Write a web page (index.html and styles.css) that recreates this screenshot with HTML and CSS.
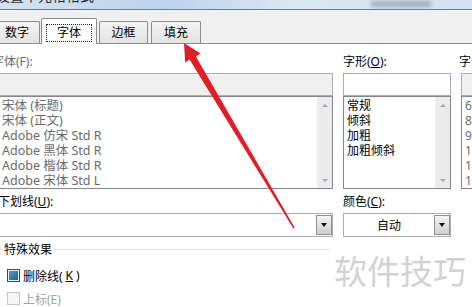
FILE: index.html
```html
<!doctype html>
<html>
	<head>
		<meta charset="utf-8">
		<title>设置单元格格式</title>
		<link rel="stylesheet" href="styles.css">
	</head>
	<body>
		<div class="titlebar">
			<span class="title">设置单元格格式</span>
			<span class="blur"></span>
		</div>

		<div class="tabs">
			<div class="tab tab-num">数字</div>
			<div class="tab tab-font active"><span class="focus">字体</span></div>
			<div class="tab tab-border">边框</div>
			<div class="tab tab-fill">填充</div>
		</div>

		<div class="panel">
			<div class="fontgrid">
				<div class="col">
					<div class="label dim">字体(F):</div>
					<div class="input gray"></div>
					<div class="list">
						<ul class="items dim wide">
							<li>宋体 (标题)</li>
							<li>宋体 (正文)</li>
							<li>Adobe 仿宋 Std R</li>
							<li>Adobe 黑体 Std R</li>
							<li>Adobe 楷体 Std R</li>
							<li>Adobe 宋体 Std L</li>
						</ul>
						<div class="scroll"><span class="up"></span><span class="down"></span></div>
					</div>
				</div>
				<div class="col">
					<div class="label">字形(<u>O</u>):</div>
					<div class="input"></div>
					<div class="list">
						<ul class="items">
							<li>常规</li>
							<li>倾斜</li>
							<li>加粗</li>
							<li>加粗倾斜</li>
						</ul>
						<div class="scroll"><span class="up"></span><span class="down"></span></div>
					</div>
				</div>
				<div class="col size">
					<div class="label">字号(<u>S</u>):</div>
					<div class="input gray"></div>
					<div class="list">
						<ul class="items dim">
							<li>6</li>
							<li>8</li>
							<li>9</li>
							<li>10</li>
							<li>11</li>
							<li>12</li>
						</ul>
					</div>
				</div>
			</div>

			<div class="lowergrid">
				<div class="col">
					<div class="label under">下划线(<u>U</u>):</div>
					<div class="combo">
						<span class="value"></span>
						<span class="btn"><i class="tri"></i></span>
					</div>
				</div>
				<div class="col">
					<div class="label">颜色(<u>C</u>):</div>
					<div class="combo">
						<span class="value">自动</span>
						<span class="btn"><i class="tri"></i></span>
					</div>
				</div>
			</div>

			<div class="group">
				<div class="group-head"><span class="legend">特殊效果</span></div>
				<div class="checks">
					<div class="check"><span class="box on"></span>删除线(<u>K</u>)</div>
					<div class="check off"><span class="box"></span>上标(E)</div>
				</div>
			</div>
		</div>

		<div class="watermark">软件技巧</div>

		<svg class="arrow" width="472" height="307" viewBox="0 0 472 307">
			<polygon points="184,43 200.5,53.5 195.9,56.6 294.6,227.6 293.4,228.4 189.5,59.6 185.2,62.4" fill="#e31d26"/>
		</svg>
	</body>
</html>
```

FILE: styles.css
```css
body {
	margin: 0;
	width: 472px;
	height: 307px;
	overflow: hidden;
	position: relative;
	background: #fff;
	color: #000;
	font-family: "Noto Sans", "Noto Sans CJK SC", sans-serif;
	font-size: 12px;
}

/* window title (cut off at the top) */
.titlebar {
	height: 9px;
	border-bottom: 1px solid #6f7f92;
	background: linear-gradient(to right, #d6e3f1, #bcd3ec 35%, #dbe7f4 62%, #d2e2f2);
	overflow: hidden;
	display: flex;
}
.title {
	font-size: 14px;
	line-height: 14px;
	margin-top: -11px;
	margin-left: -4px;
	color: #1e2b3a;
	white-space: nowrap;
}
.blur {
	width: 60px;
	height: 6px;
	margin-left: 277px;
	margin-top: 1px;
	background: #5d6b7c;
	opacity: 0.45;
	filter: blur(2px);
}

/* tab strip */
.tabs {
	height: 33px;
	margin-left: -6px;
	background: #f0f0f0;
	display: flex;
	align-items: flex-end;
}
.tab {
	height: 22px;
	box-sizing: border-box;
	border: 1px solid #898c95;
	border-bottom: none;
	border-radius: 2px 2px 0 0;
	background: linear-gradient(#f4f4f4, #e2e2e2);
	display: flex;
	align-items: center;
	justify-content: center;
	line-height: 15px;
}
.tab-num { width: 46px; margin-right: 1px; }
.tab-font { width: 56px; margin-right: 2px; }
.tab-border { width: 49px; margin-right: 3px; }
.tab-fill { width: 50px; }
.tab.active {
	height: 26px;
	margin-bottom: -1px;
	background: #fff;
	position: relative;
	z-index: 1;
}
.focus {
	width: 46px;
	height: 18px;
	box-sizing: border-box;
	border: 1px dotted #222;
	display: flex;
	align-items: center;
	justify-content: center;
	margin-top: 2px;
}

/* page body */
.panel {
	border-top: 1px solid #898c95;
	margin-left: -8px;
	padding-top: 10px;
}
.fontgrid,
.lowergrid {
	display: grid;
	grid-template-columns: 341px 108px 80px;
	column-gap: 10px;
}
.col {
	display: flex;
	flex-direction: column;
}
.label {
	height: 15px;
	line-height: 15px;
	margin-bottom: 4px;
	white-space: nowrap;
}
.dim { color: #6b6b6b; }
.size .label { margin-left: -2px; }

.input {
	height: 23px;
	box-sizing: border-box;
	border: 1px solid #abadb3;
	background: #fff;
}
.input.gray { background: #f0f0f0; }

.list {
	height: 93px;
	box-sizing: border-box;
	border: 1px solid #828790;
	display: flex;
	background: #fff;
}
.items {
	flex: 1;
	margin: 0;
	padding: 1px 0 0 3px;
	list-style: none;
	line-height: 15px;
	white-space: nowrap;
}
.items.wide {
	padding-left: 9px;
	font-size: 12.5px;
}
.scroll {
	width: 15px;
	background: #ececec;
	display: flex;
	flex-direction: column;
	justify-content: space-between;
	align-items: center;
	padding: 7px 0 6px;
	box-sizing: border-box;
}
.up,
.down {
	width: 0;
	height: 0;
	border-left: 3px solid transparent;
	border-right: 3px solid transparent;
}
.up { border-bottom: 3px solid #a6a6a6; }
.down { border-top: 3px solid #a6a6a6; }

/* underline / colour */
.lowergrid .label { margin-top: 5px; }
.label.under { margin-left: 6px; }
.combo {
	height: 24px;
	box-sizing: border-box;
	border: 1px solid #abadb3;
	display: flex;
	align-items: center;
	background: #fff;
}
.value {
	flex: 1;
	text-align: center;
}
.btn {
	width: 16px;
	height: 20px;
	box-sizing: border-box;
	border: 1px solid #8e8f8f;
	background: linear-gradient(#f3f3f3, #cfcfcf);
	display: flex;
	align-items: center;
	justify-content: center;
}
.tri {
	width: 0;
	height: 0;
	border-left: 3.5px solid transparent;
	border-right: 3.5px solid transparent;
	border-top: 4px solid #111;
}

/* effects group */
.group {
	width: 337px;
	margin-top: 5px;
}
.group-head {
	height: 15px;
	line-height: 15px;
	display: flex;
	align-items: center;
}
.group-head::before,
.group-head::after {
	content: "";
	border-top: 1px solid #d5dfe5;
}
.group-head::before { width: 10px; }
.group-head::after { flex: 1; }
.legend { padding: 0 2px; }

.checks {
	margin-top: 7px;
	padding-left: 15px;
}
.check {
	height: 23px;
	display: flex;
	align-items: center;
	gap: 3px;
	white-space: nowrap;
}
.check.off { color: #a3a3a3; }
.box {
	width: 13px;
	height: 13px;
	box-sizing: border-box;
	border: 1px solid #c4c4c4;
	background: #f6f6f6;
}
.box.on {
	border-color: #3b4a5a;
	box-shadow: inset 0 0 0 1px #e8eef4;
	background: linear-gradient(135deg, #4aa3d8, #1d5c8a);
}

/* overlays: watermark and pointer arrow */
.watermark {
	position: absolute;
	left: 334px;
	top: 252px;
	font-family: "Noto Sans CJK SC", sans-serif;
	font-size: 33px;
	line-height: 36px;
	color: #d2d2d2;
	white-space: nowrap;
}
.arrow {
	position: absolute;
	left: 0;
	top: 0;
	pointer-events: none;
}
```
